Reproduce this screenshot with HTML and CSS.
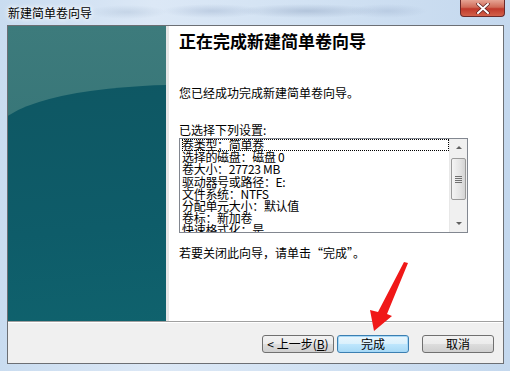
FILE: index.html
```html
<!DOCTYPE html>
<html lang="zh-CN">
<head>
  <meta charset="UTF-8">
  <title>新建简单卷向导</title>
  <link rel="stylesheet" href="styles.css">
</head>
<body>
  <div class="window">
    <div class="titlebar">
      <span class="title">新建简单卷向导</span>
      <span class="close">
        <svg width="14" height="11" viewBox="0 0 14 11"><path d="M2 1 L12 10 M12 1 L2 10" stroke="#5a2020" stroke-width="3.4" stroke-linecap="round"/><path d="M2 1 L12 10 M12 1 L2 10" stroke="#fff" stroke-width="2" stroke-linecap="round"/></svg>
      </span>
    </div>

    <div class="client">
      <div class="main">
        <div class="side"><div class="side-dark"></div></div>
        <div class="content">
          <h1>正在完成新建简单卷向导</h1>
          <p class="intro">您已经成功完成新建简单卷向导。</p>
          <p class="label">已选择下列设置:</p>
          <div class="listbox">
            <div class="items">
              <div class="item focus">卷类型：简单卷</div>
              <div class="item">选择的磁盘：磁盘 0</div>
              <div class="item">卷大小：27723 MB</div>
              <div class="item">驱动器号或路径：E:</div>
              <div class="item">文件系统：NTFS</div>
              <div class="item">分配单元大小：默认值</div>
              <div class="item">卷标：新加卷</div>
              <div class="item">快速格式化：是</div>
            </div>
            <div class="scrollbar">
              <div class="arrow up"></div>
              <div class="track">
                <div class="thumb"><span></span><span></span><span></span><span></span></div>
              </div>
              <div class="arrow down"></div>
            </div>
          </div>
          <p class="outro">若要关闭此向导，请单击“完成”。</p>
        </div>
      </div>

      <div class="footer">
        <button class="btn">&lt; 上一步(<u>B</u>)</button>
        <button class="btn default">完成</button>
        <button class="btn cancel">取消</button>
      </div>
    </div>
  </div>

  <svg class="pointer" width="510" height="371" viewBox="0 0 510 371">
    <polygon points="404,262 408,263 387,314 392,316 374,331 370,310 378,312" fill="#f01818"/>
  </svg>
</body>
</html>
```

FILE: styles.css
```css
body {
  margin: 0;
  width: 510px;
  height: 371px;
  overflow: hidden;
  font-family: "Noto Sans CJK SC", sans-serif;
  font-size: 12px;
  color: #000;
  position: relative;
}

.window {
  width: 510px;
  height: 371px;
  box-sizing: border-box;
  padding: 0 6px 7px 7px;
  display: flex;
  flex-direction: column;
  background: linear-gradient(90deg, #c9dcf0 0%, #dce8f6 30%, #d2e2f3 60%, #c4d8ee 100%);
}

.titlebar {
  height: 25px;
  display: flex;
  align-items: flex-start;
  justify-content: space-between;
  background:
    radial-gradient(ellipse 40px 7px at 120px 12px, rgba(160,180,205,0.35), transparent),
    radial-gradient(ellipse 50px 7px at 205px 11px, rgba(150,170,200,0.4), transparent),
    radial-gradient(ellipse 70px 7px at 300px 11px, rgba(140,160,190,0.45), transparent),
    radial-gradient(ellipse 40px 7px at 380px 11px, rgba(150,170,200,0.35), transparent);
}

.title {
  margin-top: 6px;
  margin-left: 1px;
  font-size: 12px;
  line-height: 14px;
  text-shadow: 0 0 6px #fff, 0 0 4px #fff;
}

.close {
  width: 45px;
  height: 17px;
  margin-right: -1px;
  display: flex;
  align-items: center;
  justify-content: center;
  box-sizing: border-box;
  border: 1px solid #6b2a2a;
  border-top: none;
  border-radius: 0 0 4px 4px;
  background: linear-gradient(180deg, #e6a494 0%, #d06b58 45%, #c0392b 55%, #d2614a 100%);
}

.client {
  flex: 1;
  display: flex;
  flex-direction: column;
  border: 1px solid #6c6f74;
  background: #fff;
}

.main {
  flex: 1;
  display: flex;
  border-bottom: 1px solid #a0a0a0;
}

.side {
  width: 158px;
  position: relative;
  overflow: hidden;
  background: linear-gradient(180deg, #3d7b7c 0%, #2f6e72 100%);
  border-right: 3px solid #e6e6e6;
}

/* darker lower part with the curved edge */
.side-dark {
  position: absolute;
  left: -12px;
  top: 59px;
  width: 400px;
  height: 400px;
  border-top-left-radius: 182px 48px;
  background: linear-gradient(175deg, #0e5763 0%, #0e5c69 35%, #10656f 70%, #136c7c 100%);
}

.content {
  flex: 1;
  padding: 5px 0 0 10px;
}

h1 {
  margin: 0;
  font-size: 17px;
  line-height: 20px;
  font-weight: bold;
}

.intro {
  margin: 35px 0 0;
  line-height: 14px;
}

.label {
  margin: 23px 0 0;
  line-height: 14px;
}

.listbox {
  margin-top: 1px;
  width: 289px;
  height: 95px;
  box-sizing: border-box;
  border: 1px solid #828790;
  display: flex;
  overflow: hidden;
}

.items {
  flex: 1;
  padding: 0 0 0 2px;
  overflow: hidden;
}

.item {
  font-size: 12px;
  line-height: 12.2px;
  white-space: nowrap;
  letter-spacing: -0.3px;
}

.item.focus {
  outline: 1px dotted #000;
  outline-offset: -1px;
}

.scrollbar {
  width: 17px;
  display: flex;
  flex-direction: column;
  background: #f0f0f0;
  border-left: 1px solid #e8e8e8;
}

.arrow {
  height: 17px;
  display: flex;
  align-items: center;
  justify-content: center;
}

.arrow::after {
  content: "";
  border-left: 3px solid transparent;
  border-right: 3px solid transparent;
}

.arrow.up::after {
  border-bottom: 3px solid #606060;
}

.arrow.down::after {
  border-top: 3px solid #606060;
}

.track {
  flex: 1;
  padding-top: 2px;
}

.thumb {
  height: 42px;
  margin: 0 1px;
  box-sizing: border-box;
  border: 1px solid #9a9a9a;
  border-radius: 2px;
  background: linear-gradient(90deg, #f4f4f4, #e4e4e4 60%, #d4d4d4);
  display: flex;
  flex-direction: column;
  align-items: center;
  justify-content: center;
  gap: 1px;
}

.thumb span {
  width: 7px;
  height: 1px;
  background: #707070;
}

.outro {
  margin: 13px 0 0;
  line-height: 14px;
}

.footer {
  height: 41px;
  background: #f0f0f0;
  border-top: 1px solid #fff;
  display: flex;
  align-items: flex-start;
  padding: 12px 0 0 254px;
  box-sizing: border-box;
}

.btn {
  width: 72px;
  height: 18px;
  padding: 0;
  font-family: "Noto Sans CJK SC", sans-serif;
  font-size: 12px;
  line-height: 14px;
  color: #000;
  border: 1px solid #707070;
  border-radius: 3px;
  background: linear-gradient(180deg, #f2f2f2 0%, #ebebeb 50%, #dddddd 51%, #cfcfcf 100%);
}

.btn.default {
  margin-left: 3px;
  border-color: #3c7fb1;
  box-shadow: inset 0 0 0 1px #a6d8f7;
  background: linear-gradient(180deg, #eaf6fd 0%, #d9f0fc 50%, #bee6fd 51%, #a7d9f5 100%);
}

.btn.cancel {
  margin-left: 13px;
}

.pointer {
  position: absolute;
  left: 0;
  top: 0;
  pointer-events: none;
}
```
